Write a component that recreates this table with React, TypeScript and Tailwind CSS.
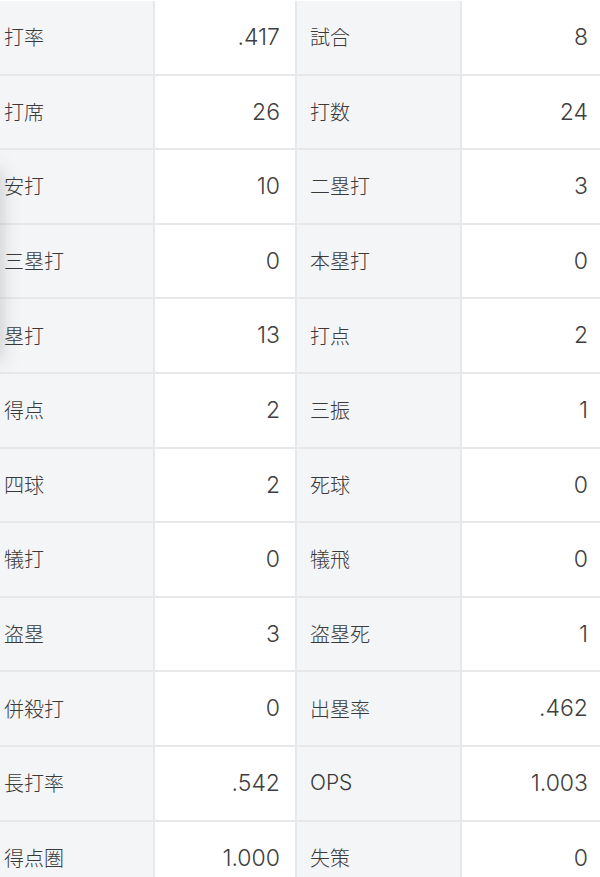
const rows: [string, string, string, string][] = [
  ["打率", ".417", "試合", "8"],
  ["打席", "26", "打数", "24"],
  ["安打", "10", "二塁打", "3"],
  ["三塁打", "0", "本塁打", "0"],
  ["塁打", "13", "打点", "2"],
  ["得点", "2", "三振", "1"],
  ["四球", "2", "死球", "0"],
  ["犠打", "0", "犠飛", "0"],
  ["盗塁", "3", "盗塁死", "1"],
  ["併殺打", "0", "出塁率", ".462"],
  ["長打率", ".542", "OPS", "1.003"],
  ["得点圏", "1.000", "失策", "0"],
];

const label =
  "flex items-center bg-[#f4f5f7] border-r-2 border-[#e7e8ea] text-[20px] text-[#3a3a3a] font-['Noto_Sans_CJK_JP',sans-serif] font-light";
const value =
  "flex items-center justify-end bg-white text-[23px] text-[#3f3f3f] font-['Inter','Noto_Sans_CJK_JP',sans-serif] font-light";

export default function App() {
  return (
    <div className="relative h-[877px] w-[600px] overflow-hidden bg-white">
      <div className="mt-px">
        {rows.map(([l1, v1, l2, v2]) => (
          <div
            key={l1}
            className="grid h-[74.6px] grid-cols-[155px_142px_165px_138px] border-b-2 border-[#e7e8ea]"
          >
            <div className={`${label} pl-1`}>{l1}</div>
            <div className={`${value} border-r-2 border-[#e7e8ea] pr-[15px]`}>{v1}</div>
            <div className={`${label} pl-[13px]`}>
              <span className={l2 === "OPS" ? "font-['Inter',sans-serif] text-[21px]" : ""}>{l2}</span>
            </div>
            <div className={`${value} pr-[12px]`}>{v2}</div>
          </div>
        ))}
      </div>
      <div className="pointer-events-none absolute left-[-22px] top-[170px] h-[190px] w-[22px] bg-black/20 blur-[10px]" />
    </div>
  );
}
